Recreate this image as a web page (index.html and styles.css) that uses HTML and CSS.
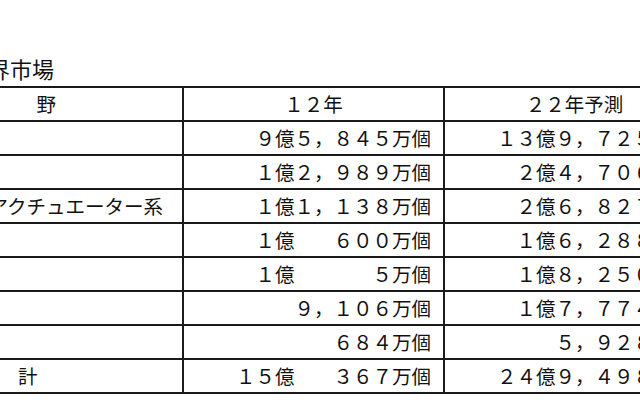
FILE: index.html
```html
<!DOCTYPE html>
<html lang="ja">
<head>
<meta charset="utf-8">
<title>世界市場</title>
<link rel="stylesheet" href="styles.css">
</head>
<body>
<div class="page">
  <div class="title">世界市場</div>
  <table class="market">
    <colgroup>
      <col class="c-field">
      <col class="c-val">
      <col class="c-val">
    </colgroup>
    <thead>
      <tr>
        <th class="field">分　　野</th>
        <th>１２年</th>
        <th>２２年予測</th>
      </tr>
    </thead>
    <tbody>
      <tr><td class="field">物理量系</td><td>９億５，８４５万個</td><td>１３億９，７２５万個</td></tr>
      <tr><td class="field">光学系</td><td>１億２，９８９万個</td><td>２億４，７０６万個</td></tr>
      <tr><td class="field">各種センサ・光アクチュエーター系</td><td>１億１，１３８万個</td><td>２億６，８２７万個</td></tr>
      <tr><td class="field">流体系</td><td>１億　　６００万個</td><td>１億６，２８８万個</td></tr>
      <tr><td class="field">音響系</td><td>１億　　　　５万個</td><td>１億８，２５０万個</td></tr>
      <tr><td class="field">高周波系</td><td>９，１０６万個</td><td>１億７，７７４万個</td></tr>
      <tr><td class="field">その他</td><td>６８４万個</td><td>５，９２８万個</td></tr>
      <tr class="total"><td class="field">合　　　　　　　計</td><td>１５億　　３６７万個</td><td>２４億９，４９８万個</td></tr>
    </tbody>
  </table>
</div>
</body>
</html>
```

FILE: styles.css
```css
html, body {
  margin: 0;
  padding: 0;
  background: #ffffff;
  overflow: hidden;
}

.page {
  width: 640px;
  height: 400px;
  overflow: hidden;
  padding-top: 56px;
  box-sizing: border-box;
  font-family: "Noto Sans CJK JP", "Noto Sans", sans-serif;
  color: #111111;
}

.title {
  font-size: 22px;
  line-height: 24px;
  height: 24px;
  margin-left: -34px;
  white-space: nowrap;
}

.market {
  margin-top: 6px;
  margin-left: -150px;
  border-collapse: collapse;
  table-layout: fixed;
  width: 854px;
  font-size: 19.5px;
}

.c-field { width: 332px; }
.c-val { width: 261px; }

.market th,
.market td {
  border: 2px solid #1a1a1a;
  height: 32px;
  padding: 0 12px 0 0;
  line-height: 22px;
  white-space: nowrap;
  overflow: hidden;
  text-align: right;
  font-weight: normal;
  vertical-align: middle;
}

.market th {
  text-align: center;
  padding: 0;
}

.market td.field {
  text-align: left;
  padding: 0;
}

.market .total td.field {
  padding-left: 10px;
}
```
